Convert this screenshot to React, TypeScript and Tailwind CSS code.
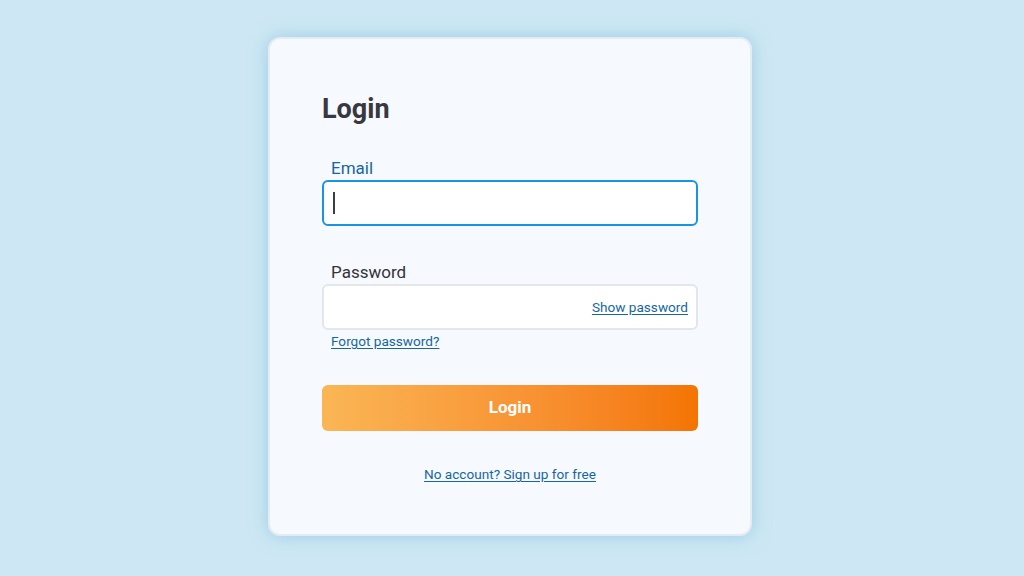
export default function App() {
  return (
    <div className="w-full h-[576px] bg-[#cde8f4] flex items-start justify-center pt-[37px] font-['Roboto',sans-serif]">
      <div className="mr-[4px] w-[484px] h-[499px] bg-[#f6f9fe] rounded-[12px] border-2 border-[#e2ecf2] shadow-[0_0_18px_rgba(120,180,215,0.55)] px-[52px] pt-[52px] flex flex-col">
        <h1 className="text-[27px] leading-[36px] font-bold text-[#383840]">Login</h1>

        <label className="mt-[30px] ml-[9px] text-[17px] leading-[22px] text-[#16679f]">Email</label>
        <div className="mt-[1px] h-[46px] rounded-[6px] border-2 border-[#1993e6] bg-white flex items-center px-[9px]">
          <span className="w-[1.5px] h-[22px] bg-[#3c3c46]" />
        </div>

        <label className="mt-[35px] ml-[9px] text-[17px] leading-[22px] text-[#333338]">Password</label>
        <div className="mt-[1px] h-[46px] rounded-[6px] border-2 border-[#e3e6ea] bg-white flex items-center justify-end px-[8px]">
          <a className="text-[13.6px] text-[#16679f] underline underline-offset-2 cursor-pointer">Show password</a>
        </div>
        <a className="mt-[2px] ml-[9px] text-[13.6px] leading-[18px] text-[#16679f] underline underline-offset-2 cursor-pointer self-start">
          Forgot password?
        </a>

        <button className="mt-[35px] h-[46px] rounded-[6px] bg-gradient-to-r from-[#fab655] to-[#f47400] text-white text-[17px] font-bold">
          Login
        </button>

        <a className="mt-[34px] self-center text-[13.6px] leading-[18px] text-[#16679f] underline underline-offset-2 cursor-pointer">
          No account? Sign up for free
        </a>
      </div>
    </div>
  );
}
